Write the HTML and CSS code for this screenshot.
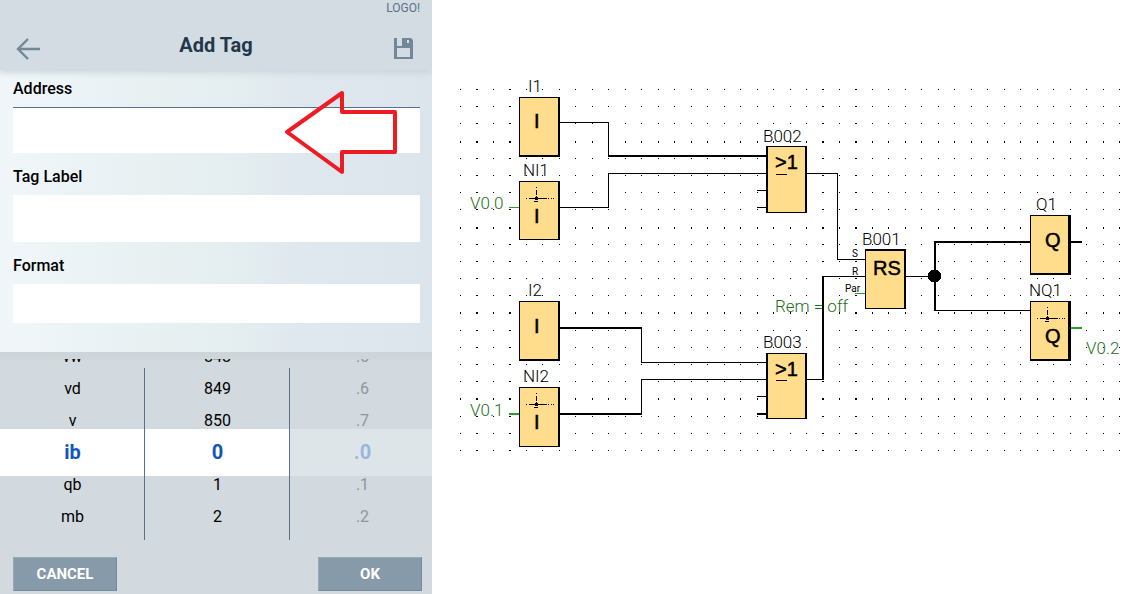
FILE: index.html
```html
<!DOCTYPE html>
<html lang="en">
<head>
<meta charset="utf-8">
<meta name="viewport" content="width=device-width, initial-scale=1">
<title>Add Tag</title>
<link rel="stylesheet" href="styles.css">
</head>
<body>
<div class="page">
  <form class="panel">
    <header class="header">
      <div class="brand">LOGO!</div>
      <div class="bar">
        <button class="icon-button" type="button" aria-label="Back">
          <svg width="26" height="24" viewBox="0 0 26 24"><path d="M25 12H3M13 2L3 12L13 22" fill="none" stroke="#72879a" stroke-width="2.4"/></svg>
        </button>
        <h1 class="title">Add Tag</h1>
        <button class="icon-button" type="button" aria-label="Save">
          <svg width="20" height="22" viewBox="0 0 20 22"><path fill="#72879a" fill-rule="evenodd" d="M0 0H3V8H8V0H17L19 2V21H0ZM13 2V5H15V2ZM3 10V19H16V10Z"/></svg>
        </button>
      </div>
    </header>

    <div class="fields">
      <div class="field">
        <label class="label" for="address">Address</label>
        <input class="input input-active" id="address" type="text">
        <svg class="pointer" width="116" height="88" viewBox="284 88 116 88" aria-hidden="true"><path d="M287 132L342 93V112H395V152H342V172Z" fill="none" stroke="#ed1c24" stroke-width="4" stroke-linejoin="round"/></svg>
      </div>
      <div class="field">
        <label class="label" for="tag-label">Tag Label</label>
        <input class="input" id="tag-label" type="text">
      </div>
      <div class="field">
        <label class="label" for="format">Format</label>
        <input class="input input-short" id="format" type="text">
      </div>
    </div>

    <div class="picker">
      <div class="wheels">
        <ul class="wheel" role="listbox" aria-label="Type">
          <li class="option" role="option">vw</li>
          <li class="option" role="option">vd</li>
          <li class="option" role="option">v</li>
          <li class="option selected" role="option" aria-selected="true">ib</li>
          <li class="option" role="option">qb</li>
          <li class="option" role="option">mb</li>
        </ul>
        <ul class="wheel" role="listbox" aria-label="Byte">
          <li class="option" role="option">848</li>
          <li class="option" role="option">849</li>
          <li class="option" role="option">850</li>
          <li class="option selected" role="option" aria-selected="true">0</li>
          <li class="option" role="option">1</li>
          <li class="option" role="option">2</li>
        </ul>
        <ul class="wheel wheel-disabled" role="listbox" aria-label="Bit" aria-disabled="true">
          <li class="option" role="option">.5</li>
          <li class="option" role="option">.6</li>
          <li class="option" role="option">.7</li>
          <li class="option selected" role="option" aria-selected="true">.0</li>
          <li class="option" role="option">.1</li>
          <li class="option" role="option">.2</li>
        </ul>
      </div>
      <div class="actions">
        <button class="action" type="button">CANCEL</button>
        <button class="action" type="button">OK</button>
      </div>
    </div>
  </form>

  <main class="canvas">
    <svg class="diagram" viewBox="432 0 697 594" role="img" aria-label="Function block diagram">
      <defs>
        <g id="negate" class="ink">
          <path d="M10 6h1v1h-1zM10 9h1v5h-1zM10 15h1v2h-1zM0 17h1v1h-1zM3 17h18v1h-18zM22 17h1v1h-1zM25 17h1v1h-1zM27 17h1v1h-1zM9 16h3v3h-3zM8 20h4v1h-4z"/>
        </g>
      </defs>

      <path id="grid" class="ink"/>

      <path class="ink" d="
        M560 122h49v1h-49z M608 122h1v34h-1z M608 155h158v2h-158z
        M560 207h49v1h-49z M608 173h1v35h-1z M608 173h158v1h-158z
        M560 327h82v2h-82z M641 327h1v36h-1z M641 362h125v1h-125z
        M560 413h82v2h-82z M641 379h1v36h-1z M641 379h125v1h-125z
        M757 190h9v1h-9z M757 207h9v1h-9z M757 396h9v1h-9z M757 413h9v2h-9z
        M807 173h31v1h-31z M837 173h1v87h-1z M837 259h28v1h-28z
        M807 379h17v1h-17z M822 276h2v104h-2z M822 276h43v1h-43z
        M906 276h29v1h-29z M934 241h2v70h-2z M934 241h96v2h-96z M934 310h96v1h-96z
        M1071 241h11v2h-11z"/>
      <path class="link" d="M509 207h10v1h-10z M509 413h10v2h-10z M855 293h10v1h-10z M1071 327h11v2h-11z"/>
      <circle class="ink" cx="934.5" cy="276" r="6.5"/>

      <path class="ink" d="
        M519 97h41v60h-41z M519 181h41v59h-41z M519 301h41v60h-41z M519 387h41v60h-41z
        M766 146h41v67h-41z M766 353h41v66h-41z M865 249h41v60h-41z
        M1030 215h41v60h-41z M1030 301h41v60h-41z"/>
      <path class="block" d="
        M520 98h38v57h-38z M520 182h38v57h-38z M520 302h38v57h-38z M520 388h38v58h-38z
        M768 147h37v65h-37z M768 354h37v64h-37z M866 251h38v57h-38z
        M1031 216h37v57h-37z M1031 302h37v57h-37z"/>
      <use href="#negate" x="526" y="181"/>
      <use href="#negate" x="526" y="387"/>
      <use href="#negate" x="1037" y="301"/>
      <path class="ink" d="M776 174h11v1h-11z M776 380h11v1h-11z"/>

      <g class="name">
        <text x="528" y="92">I1</text>
        <text x="523" y="176">NI1</text>
        <text x="528" y="296">I2</text>
        <text x="523" y="382">NI2</text>
        <text x="763" y="142">B002</text>
        <text x="763" y="348">B003</text>
        <text x="862" y="245">B001</text>
        <text x="1036" y="210">Q1</text>
        <text x="1029" y="296">NQ1</text>
      </g>
      <g class="name reference">
        <text x="470" y="209">V0.0</text>
        <text x="470" y="416">V0.1</text>
        <text x="1086" y="354">V0.2</text>
        <text x="775" y="312">Rem = off</text>
      </g>
      <g class="symbol">
        <text x="534" y="128">I</text>
        <text x="534" y="223">I</text>
        <text x="534" y="333">I</text>
        <text x="534" y="429">I</text>
        <text x="775" y="169">&gt;1</text>
        <text x="775" y="376">&gt;1</text>
        <text x="873" y="275">RS</text>
        <text x="1045" y="247">Q</text>
        <text x="1045" y="343">Q</text>
      </g>
      <g class="pin">
        <text x="852" y="257">S</text>
        <text x="852" y="275">R</text>
        <text x="845" y="292">Par</text>
      </g>
    </svg>
  </main>
</div>
<script src="grid.js"></script>
</body>
</html>
```
FILE: styles.css
```css
* {
  box-sizing: border-box;
}

body {
  margin: 0;
  background: #fff;
  font-family: Roboto, "Liberation Sans", sans-serif;
}

.page {
  display: grid;
  grid-template-columns: 432fr 697fr;
  min-height: 100vh;
}

.panel {
  display: flex;
  flex-direction: column;
  overflow: hidden;
  background: linear-gradient(90deg, #f0f6f9, #e4edef 55%, #e0e8ef 70%, #dce4ec);
}

.header {
  padding: 0 12px 8px;
  background: #d3dce2;
  box-shadow: 0 1px 7px 1px #c8d0d3;
}

.brand {
  font-size: 12px;
  line-height: 16px;
  text-align: right;
  color: #5c7186;
}

.bar {
  display: flex;
  align-items: center;
  justify-content: space-between;
  height: 46px;
}

.icon-button {
  display: flex;
  align-items: center;
  justify-content: center;
  width: 32px;
  height: 32px;
  margin-top: 20px;
  padding: 0;
  border: 0;
  background: none;
}

.title {
  margin: 12px 0 0;
  font-size: 20px;
  line-height: 24px;
  font-weight: 700;
  color: #23374a;
}

.fields {
  display: flex;
  flex-direction: column;
  flex: 1;
  gap: 13px;
  padding: 8px 12px 29px 13px;
}

.field {
  position: relative;
  display: flex;
  flex-direction: column;
  gap: 7px;
}

.label {
  font-size: 16px;
  line-height: 22px;
  font-weight: 500;
  color: #000;
}

.input {
  width: 100%;
  height: 47px;
  padding: 0 12px;
  border: 0;
  border-radius: 0;
  background: #fff;
  font: 16px Roboto, sans-serif;
}

.input-active {
  height: 46px;
  border-top: 1px solid #5c7186;
}

.input-short {
  height: 39px;
}

.pointer {
  position: absolute;
  top: 10px;
  right: 20px;
}

.picker {
  padding-top: 7px;
  background: linear-gradient(#ccd5d9, #cfd6d9 7px, #d2d9df 8px);
}

.wheels {
  display: grid;
  grid-template-columns: repeat(3, 1fr);
  height: 181px;
  margin-right: -3px;
  overflow: hidden;
}

.wheel {
  position: relative;
  margin: 0;
  padding: 0;
  list-style: none;
}

.wheel + .wheel::before {
  content: "";
  position: absolute;
  z-index: 1;
  top: 9px;
  bottom: 0;
  left: -1px;
  width: 1px;
  background: #5c7186;
}

.option {
  height: 32px;
  font-size: 16px;
  line-height: 32px;
  text-align: center;
  color: #000;
}

.option:first-child {
  margin-top: -18px;
}

.selected {
  height: 47px;
  margin: -8px 0 -7px;
  background: #fff;
  font-size: 20px;
  line-height: 47px;
  font-weight: 700;
  color: #0f56bd;
}

.wheel-disabled .option {
  color: #8f979b;
}

.wheel-disabled .selected {
  background: #dde5e8;
  color: #9bb6de;
}

.actions {
  display: flex;
  justify-content: space-between;
  padding: 17px 10px 3px 13px;
}

.action {
  width: 104px;
  height: 34px;
  padding: 0;
  border: 1px solid;
  border-color: #99aab7 #758a9b #758a9b #99aab7;
  background: #879aaa;
  font: 700 15px Roboto, sans-serif;
  color: #fff;
}

.diagram {
  display: block;
  width: 100%;
  height: auto;
}

.ink {
  fill: #000;
  shape-rendering: crispEdges;
}

.link {
  fill: #339933;
  shape-rendering: crispEdges;
}

.block {
  fill: #ffdd8c;
  shape-rendering: crispEdges;
}

.name {
  font-size: 17px;
  font-weight: 300;
  fill: #000;
}

.reference {
  fill: #1e6e1e;
}

.symbol {
  font-family: "Liberation Sans", sans-serif;
  font-size: 20px;
  fill: #000;
  stroke: #000;
  stroke-width: 0.5;
}

.pin {
  font-size: 10px;
  fill: #000;
}
```
FILE: grid.js
```js
// Snap grid of the diagram: 41 columns by 22 rows, every point on a whole pixel.
const wideColumns = [1, 3, 22, 24];
const tallRows = [3, 8, 13, 18];
let dots = "";
for (let row = 0; row < 22; row++) {
  for (let col = 0; col < 41; col++) {
    const x = Math.round(460 + (col * 659) / 40);
    const y = Math.round(89 + (row * 361) / 21);
    const w = wideColumns.includes(col) ? 2 : 1;
    const h = tallRows.includes(row) ? 2 : 1;
    dots += `M${x} ${y}h${w}v${h}h-${w}z`;
  }
}
document.getElementById("grid").setAttribute("d", dots);
```
